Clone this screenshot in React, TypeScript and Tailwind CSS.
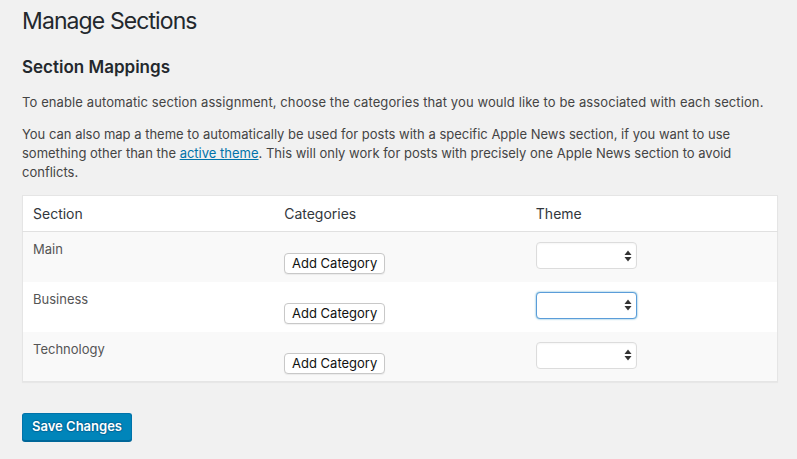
const sections = ['Main', 'Business', 'Technology']

function SelectArrows() {
  return (
    <svg width="8" height="12" viewBox="0 0 8 12" className="absolute right-[4px] top-1/2 -translate-y-1/2">
      <path d="M4 0.5 L7.5 5 L0.5 5 Z" fill="#333" />
      <path d="M4 11.5 L7.5 7 L0.5 7 Z" fill="#333" />
    </svg>
  )
}

function ThemeSelect({ focused }: { focused?: boolean }) {
  return (
    <div
      className={
        focused
          ? 'relative mt-[2px] h-[27px] w-[101px] rounded-[4px] border border-[#5b9dd9] bg-white shadow-[0_0_2px_rgba(30,140,190,0.8)]'
          : 'relative mt-[2px] h-[27px] w-[101px] rounded-[4px] border border-[#dcdcdc] bg-white shadow-[inset_0_1px_2px_rgba(0,0,0,0.04)]'
      }
    >
      <SelectArrows />
    </div>
  )
}

export default function App() {
  return (
    <div className="min-h-screen bg-[#f1f1f1] font-[Inter,sans-serif] text-[13px] text-[#444]">
      <div className="pl-[22px] pr-[19px] pt-[7px]">
        <h1 className="text-[23px] leading-[29px] font-normal tracking-[-0.9px] text-[#23282d]">Manage Sections</h1>
        <h2 className="mt-[19px] text-[17px] leading-[24px] font-semibold text-[#23282d]">Section Mappings</h2>
        <p className="mt-[14px] leading-[19px] tracking-[0.1px]">
          To enable automatic section assignment, choose the categories that you would like to be associated with each section.
        </p>
        <p className="mt-[13px] leading-[19px]">
          You can also map a theme to automatically be used for posts with a specific Apple News section, if you want to use
          something other than the{' '}
          <a href="#" className="text-[#0073aa] underline">
            active theme
          </a>
          . This will only work for posts with precisely one Apple News section to avoid conflicts.
        </p>

        <table className="mt-[13px] w-full table-fixed border-collapse border border-[#e5e5e5] bg-white shadow-[0_1px_1px_rgba(0,0,0,0.04)]">
          <thead>
            <tr className="border-b border-[#e1e1e1]">
              <th className="px-[10px] pt-[8px] pb-[8px] text-left text-[14px] leading-[19px] font-normal text-[#32373c]">Section</th>
              <th className="px-[10px] pt-[8px] pb-[8px] text-left text-[14px] leading-[19px] font-normal text-[#32373c]">Categories</th>
              <th className="px-[10px] pt-[8px] pb-[8px] text-left text-[14px] leading-[19px] font-normal text-[#32373c]">Theme</th>
            </tr>
          </thead>
          <tbody>
            {sections.map((name, i) => (
              <tr key={name} className={i % 2 === 0 ? 'h-[50px] bg-[#f9f9f9]' : 'h-[50px] bg-white'}>
                <td className="px-[10px] pt-[8px] align-top leading-[19px] text-[#555]">{name}</td>
                <td className="px-[10px] pt-[8px] align-top">
                  <button className="mt-[13px] h-[21px] w-[101px] rounded-[4px] border border-[#c8c8c8] bg-white text-[13px] leading-[19px] text-[#111] shadow-[0_1px_1px_rgba(0,0,0,0.06)]">
                    Add Category
                  </button>
                </td>
                <td className="px-[10px] pt-[8px] align-top">
                  <ThemeSelect focused={name === 'Business'} />
                </td>
              </tr>
            ))}
          </tbody>
        </table>

        <button className="mt-[31px] h-[28px] rounded-[3px] border border-[#0073aa] border-b-[#006799] bg-[#0085ba] px-[9px] pb-[1px] text-[13px] font-semibold text-white shadow-[0_1px_0_#006799] [text-shadow:0_-1px_1px_#006799,1px_0_1px_#006799,0_1px_1px_#006799,-1px_0_1px_#006799]">
          Save Changes
        </button>
      </div>
    </div>
  )
}
